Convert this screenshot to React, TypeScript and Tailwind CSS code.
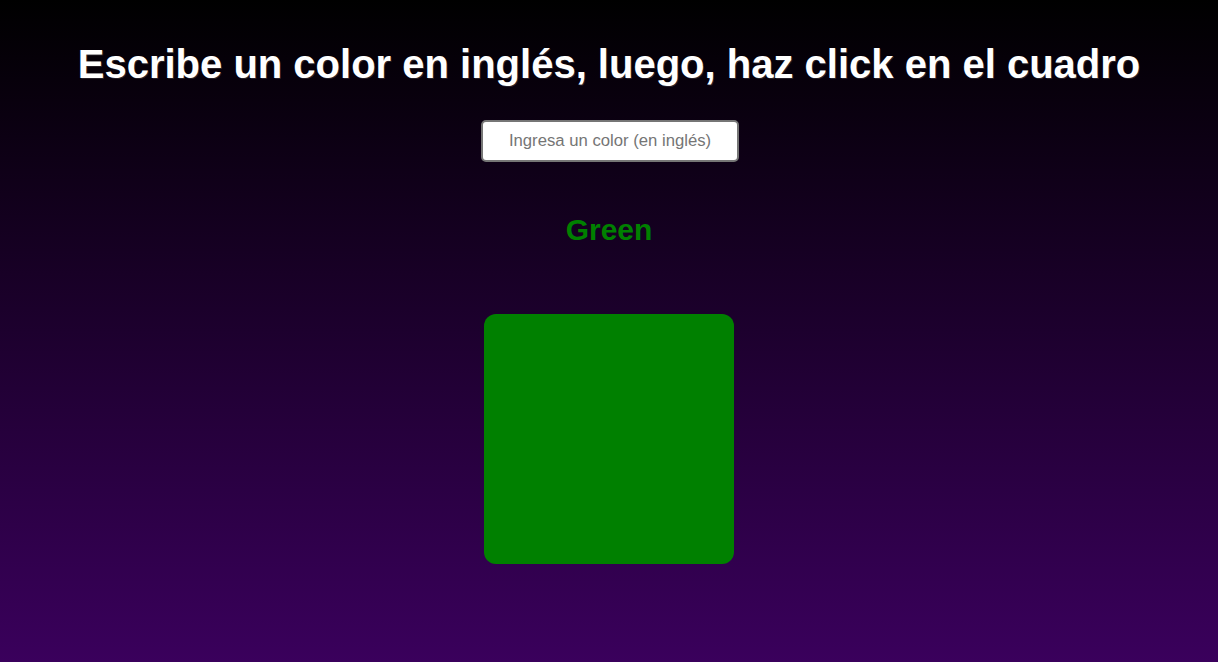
export default function App() {
  return (
    <div className="min-h-[662px] w-full bg-linear-to-b/srgb from-black to-[#3a005c] flex flex-col items-center font-['Liberation_Sans',Arial,sans-serif]">
      <h1 className="mt-[40px] text-[40px] leading-[48px] font-bold text-white [text-shadow:1px_1px_0_rgba(255,255,255,0.15)]">
        Escribe un color en inglés, luego, haz click en el cuadro
      </h1>
      <input
        type="text"
        placeholder="Ingresa un color (en inglés)"
        className="mt-[32px] ml-[2px] w-[258px] h-[42px] rounded-[5px] border-2 border-[#767676] bg-white text-center text-[16.7px] text-black placeholder:text-[#757575] outline-none"
      />
      <h2 className="mt-[48px] text-[30px] leading-[40px] font-bold text-[#008000]">Green</h2>
      <div className="mt-[64px] w-[250px] h-[250px] rounded-[12px] bg-[#008000] cursor-pointer" />
    </div>
  );
}
